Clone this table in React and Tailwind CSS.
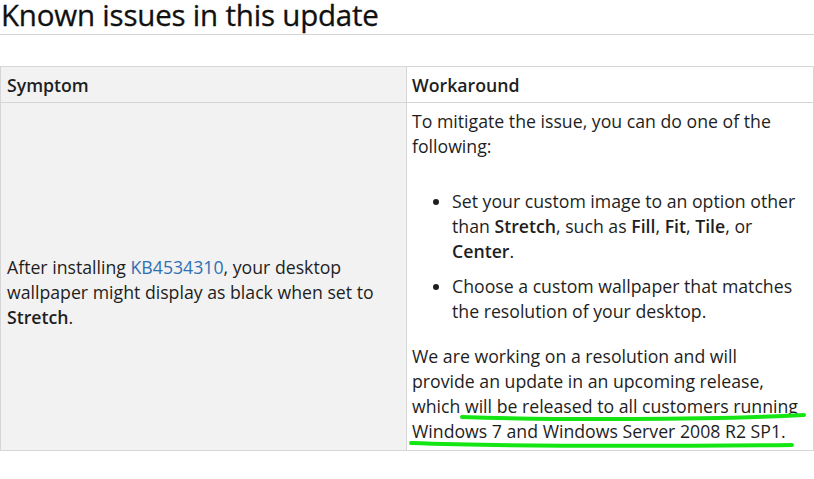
export default function App() {
  return (
    <div
      className="w-[814px] h-[479px] overflow-hidden bg-white text-[#1e1e1e]"
      style={{ fontFamily: '"Open Sans", "Noto Sans", sans-serif' }}
    >
      {/* Heading */}
      <div className="border-b border-[#d4d4d4] h-[39px] -mt-[4px]">
        <h2 className="text-[29.5px] leading-[38px] pl-[1px] text-[#111] tracking-[-0.2px] [-webkit-text-stroke:0.3px_#111]">
          Known issues in this update
        </h2>
      </div>

      <div className="mt-[31px] relative">
        <table className="w-[814px] border-collapse text-[17.7px] leading-[25px] table-fixed">
          <thead>
            <tr className="h-[36px]">
              <th className="w-[406px] border border-[#d6d6d6] bg-[#f2f2f2] text-left font-semibold px-[6px] pt-[2px]">
                Symptom
              </th>
              <th className="border border-[#d6d6d6] bg-white text-left font-semibold px-[5px] pt-[2px]">
                Workaround
              </th>
            </tr>
          </thead>
          <tbody>
            <tr>
              <td className="border border-[#d6d6d6] bg-[#f2f2f2] align-middle pl-[6px] pr-[10px] pt-[32px]">
                After installing <span className="text-[#2f70b2]">KB4534310</span>, your desktop
                wallpaper might display as black when set to <b className="font-semibold">Stretch</b>.
              </td>
              <td className="border border-[#d6d6d6] align-top pl-[5px] pr-[4px] pt-[6px] pb-[6px]">
                <p>To mitigate the issue, you can do one of the following:</p>
                <ul className="list-disc pl-[40px] mt-[30px] flex flex-col gap-[10px]">
                  <li>
                    Set your custom image to an option other than <b className="font-semibold">Stretch</b>, such as{" "}
                    <b className="font-semibold">Fill</b>, <b className="font-semibold">Fit</b>,{" "}
                    <b className="font-semibold">Tile</b>, or <b className="font-semibold">Center</b>.
                  </li>
                  <li>Choose a custom wallpaper that matches the resolution of your desktop.</li>
                </ul>
                <p className="mt-[20px]">
                  We are working on a resolution and will
                  <br />
                  provide an update in an upcoming release,
                  <br />
                  which will be released to all customers running
                  <br />
                  Windows 7 and Windows Server 2008 R2 SP1.
                </p>
              </td>
            </tr>
          </tbody>
        </table>

        {/* Green highlight strokes */}
        <svg
          className="absolute left-0 top-0 pointer-events-none"
          width="814"
          height="413"
          viewBox="0 66 814 413"
        >
          <path
            d="M462 417 C560 420 700 420 804 415"
            stroke="#14e614"
            strokeWidth="4"
            fill="none"
            strokeLinecap="round"
          />
          <path
            d="M411 443 C520 447 680 446 792 445"
            stroke="#14e614"
            strokeWidth="4"
            fill="none"
            strokeLinecap="round"
          />
        </svg>
      </div>
    </div>
  );
}
